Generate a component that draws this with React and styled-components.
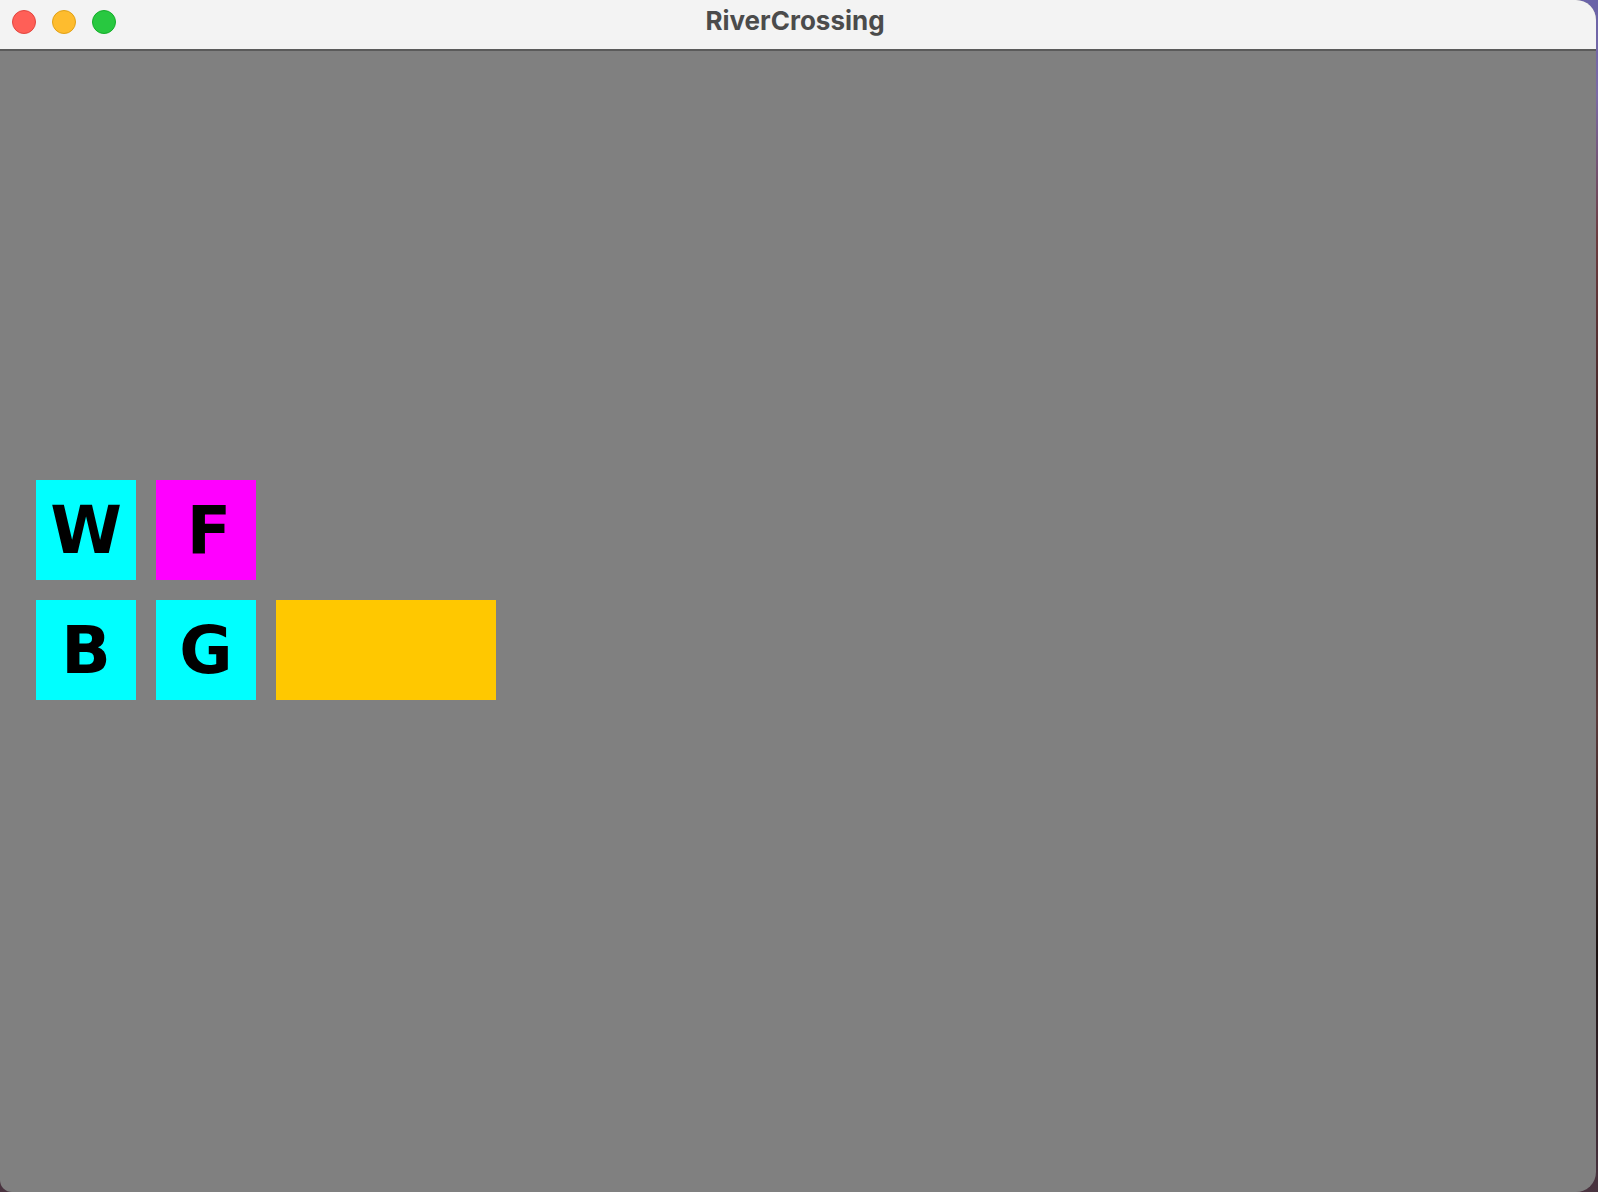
import React from 'react';
import styled, { createGlobalStyle } from 'styled-components';

const GlobalStyle = createGlobalStyle`
  html, body {
    margin: 0;
    padding: 0;
  }
  body {
    width: 1598px;
    height: 1192px;
    overflow: hidden;
    background: linear-gradient(180deg, #6a63a8 0%, #7b6aa6 8%, #6b3b3e 20%, #2a1a1a 45%, #5a3a3a 60%, #1a1010 80%, #4a3440 100%);
  }
`;

// RC = RiverCrossing window

const RCWindow = styled.div`
  width: 1596px;
  height: 1192px;
  display: flex;
  flex-direction: column;
  border-top-right-radius: 20px;
  border-bottom-right-radius: 20px;
  border-bottom-left-radius: 12px;
  overflow: hidden;
  background-color: #808080;
`;

const RCTitleBar = styled.div`
  height: 49px;
  flex-shrink: 0;
  display: flex;
  align-items: center;
  position: relative;
  background-color: #f3f3f3;
  border-bottom: 2px solid #5a5a5a;
`;

const RCLights = styled.div`
  display: flex;
  gap: 16px;
  padding-left: 12px;
  padding-bottom: 5px;
`;

const RCLight = styled.span`
  width: 24px;
  height: 24px;
  border-radius: 50%;
  box-sizing: border-box;
  background-color: ${(p) => p.color};
  border: 1px solid ${(p) => p.edge};
`;

const RCTitle = styled.div`
  position: absolute;
  left: 0;
  right: 0;
  top: 0;
  bottom: 0;
  display: flex;
  align-items: center;
  justify-content: center;
  font-family: Inter, "Noto Sans", sans-serif;
  font-weight: 700;
  font-size: 26px;
  color: #4b4b4b;
  padding: 0 6px 8px 0;
`;

const RCBoard = styled.div`
  flex: 1;
  padding: 429px 0 0 36px;
  display: grid;
  grid-template-columns: repeat(4, 100px);
  grid-auto-rows: 100px;
  gap: 20px;
  align-content: start;
`;

const RCTile = styled.div`
  display: flex;
  align-items: center;
  justify-content: center;
  padding-left: ${(p) => (p.nudge ? '6px' : '0')};
  box-sizing: border-box;
  background-color: ${(p) => p.bg};
  grid-column: ${(p) => (p.wide ? 'span 2' : 'auto')};
  grid-row: ${(p) => p.row};
  font-family: "DejaVu Sans", sans-serif;
  font-weight: 700;
  font-size: 65px;
  line-height: 1;
  color: #000000;
`;

const tiles = [
  { label: 'W', bg: '#00ffff', row: 1 },
  { label: 'F', bg: '#ff00ff', row: 1, nudge: true },
  { label: 'B', bg: '#00ffff', row: 2 },
  { label: 'G', bg: '#00ffff', row: 2 },
  { label: '', bg: '#ffc800', row: 2, wide: true },
];

function App() {
  return (
    <>
      <GlobalStyle />
      <RCWindow>
        <RCTitleBar>
          <RCLights>
            <RCLight color="#ff5f57" edge="#e2463f" />
            <RCLight color="#febc2e" edge="#e1a116" />
            <RCLight color="#28c840" edge="#14ae2a" />
          </RCLights>
          <RCTitle>RiverCrossing</RCTitle>
        </RCTitleBar>
        <RCBoard>
          {tiles.map((t, i) => (
            <RCTile key={i} bg={t.bg} row={t.row} wide={t.wide} nudge={t.nudge}>
              {t.label}
            </RCTile>
          ))}
        </RCBoard>
      </RCWindow>
    </>
  );
}

export default App;
